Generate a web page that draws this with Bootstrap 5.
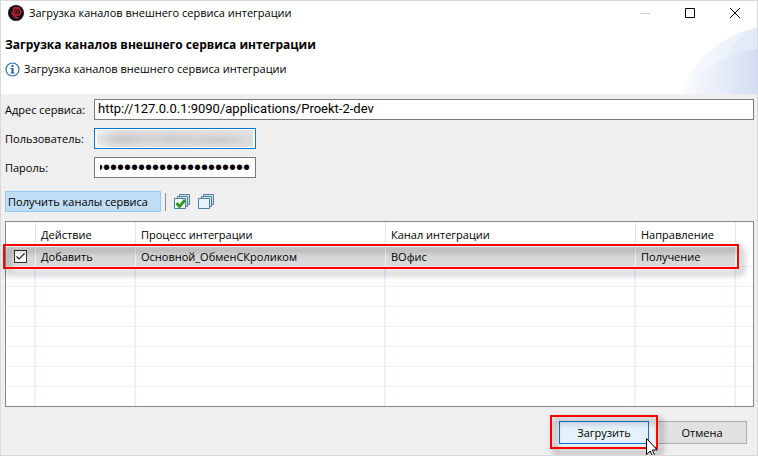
<!DOCTYPE html>
<html lang="ru">
<head>
<meta charset="utf-8">
<meta name="viewport" content="width=device-width, initial-scale=1">
<title>Загрузка каналов внешнего сервиса интеграции</title>
<link href="https://cdn.jsdelivr.net/npm/bootstrap@5.3.0/dist/css/bootstrap.min.css" rel="stylesheet">
<style>
body { font-family: "Open Sans", "Noto Sans", sans-serif; font-size: 11px; line-height: 16px; color: #000; background: #efefef; }
.win { border: 1px solid #d9d9d9; }
.titlebar { height: 24px; }
.win-btn { width: 45px; height: 22px; color: #000; }
.head { height: 69px; background: #fff; }
.head h1 { font-size: 12px; line-height: 16px; }
.swoosh { position: absolute; right: 0; bottom: 0; }
.fields { display: grid; grid-template-columns: 89px 1fr; row-gap: 8px; padding: 5px 3px 0 4px; }
.box { height: 21px; border: 1px solid #7a7a7a; border-radius: 0; background: #fff; color: #000; outline: 0; }
.narrow { width: 162px; }
.url { font-family: Roboto, sans-serif; font-size: 13px; padding: 0 3px 2px; }
.user { border-color: #0078d7; padding: 1px 2px; background:
  radial-gradient(ellipse 34px 9px at 28px 9px, #c9c7c9, transparent) content-box,
  radial-gradient(ellipse 40px 9px at 76px 9px, #cccacc, transparent) content-box,
  radial-gradient(ellipse 40px 8px at 122px 10px, #cccacc, transparent) content-box,
  linear-gradient(90deg, #eee, #e2e1e2 12%, #e0e0e1) content-box, #fff; }
.pass { font-family: "Liberation Sans", sans-serif; font-size: 20px; padding: 0 5px; text-indent: -4px; }
.get { height: 21px; width: 156px; padding: 0 2px; background: #bfddf5; border: 1px solid #90c8f6; color: #000; text-align: left; white-space: nowrap; }
.rule { width: 1px; height: 18px; background: #8d8d8d; }
.tools { padding-top: 13px; }
.grid-box { border: 1px solid #828790; background: #fff; margin: 9px 3px 0 4px; position: relative; }
.grid { table-layout: fixed; border-collapse: separate; border-spacing: 0; width: 100%; }
.grid th, .grid td { padding: 0 0 0 5px; font-weight: 400; line-height: 19px; white-space: nowrap; }
.grid th { height: 25px; border-right: 1px solid #e5e5e5; }
.grid td { height: 20px; border-bottom: 1px solid #efefef; border-right: 2px solid #ebf1fb; }
.grid th:last-child, .grid td:last-child { border-right: 0; }
.grid tbody tr:last-child td { height: 19px; border-bottom: 0; }
.grid .picked td:not(:last-child) { background: #d9d9d9; border-right-width: 1px; }
.tick { appearance: none; display: block; width: 13px; height: 13px; margin: 0 0 0 3px; border: 1px solid #333; background: #fff; }
.tick:checked { background: #fff url("data:image/svg+xml,%3Csvg xmlns='http://www.w3.org/2000/svg' viewBox='0 0 11 11'%3E%3Cpath d='M1.5 5.5 4 8l5.500-5.500' fill='none' stroke='%23222' stroke-width='1.200'/%3E%3C/svg%3E"); }
.frame { position: absolute; border: 2px solid #f00; filter: drop-shadow(4px 5px 3px rgba(0,0,0,.5)); pointer-events: none; }
.frame-row { left: -3px; right: 14px; top: 22px; height: 25px; }
.frame-btn { left: -9px; right: -9px; top: -6px; height: 34px; }
.actions { gap: 8px; padding: 14px 10px 10px; }
.push { width: 90px; height: 23px; padding: 0; border: 1px solid #adadad; background: #e1e1e1; color: #000; }
.push-main { border-color: #0078d7; background: #e5f1fb; }
.pointer { position: absolute; left: 87px; top: 17px; }
</style>
</head>
<body>
<main class="win d-flex flex-column min-vh-100 overflow-hidden position-relative">
  <header class="titlebar d-flex align-items-center bg-white">
    <svg class="ms-1 flex-shrink-0" width="20" height="16" viewBox="0 0 20 16"><g transform="translate(3)"><circle cx="8" cy="8" r="8" fill="#151012"/><path d="M6 3h5l2 4-2 3H7L5 7zM3.500 7.500l3 4.500 4 1" fill="none" stroke="#d8243c" stroke-width="1.300"/><circle cx="8.500" cy="6.500" r="1.600" fill="none" stroke="#d8243c"/></g></svg>
    <span class="ps-1 flex-grow-1">Загрузка каналов внешнего сервиса интеграции</span>
    <button class="win-btn btn p-0 border-0 d-flex align-items-center justify-content-center" aria-label="Свернуть"><svg width="10" height="10"><path d="M0 5.500h10" stroke="#ccc"/></svg></button>
    <button class="win-btn btn p-0 border-0 d-flex align-items-center justify-content-center" aria-label="Развернуть"><svg width="10" height="10"><path d="M.5.5h9v9h-9z" fill="none" stroke="#000"/></svg></button>
    <button class="win-btn btn p-0 border-0 d-flex align-items-center justify-content-center" aria-label="Закрыть"><svg width="10" height="10"><path d="M0 0l10 10M10 0L0 10" stroke="#000" stroke-width="1"/></svg></button>
  </header>
  <section class="head position-relative">
    <svg class="swoosh" width="74" height="66" viewBox="0 0 74 66" aria-hidden="true">
      <defs>
        <linearGradient id="g1"><stop offset="0" stop-color="#fafbfe"/><stop offset="1" stop-color="#e6ecf8"/></linearGradient>
        <linearGradient id="g2"><stop offset="0" stop-color="#fafbfe"/><stop offset="1" stop-color="#d3def3"/></linearGradient>
      </defs>
      <path d="M0 66C1 36 48 2 74 0v66z" fill="url(#g1)"/>
      <path d="M44 28C52 14 62 4 74 1v22C64 24 54 26 44 32z" fill="#dfe8f7" opacity=".6"/>
      <path d="M0 66C4 50 46 23 74 21v45z" fill="url(#g2)"/>
    </svg>
    <div class="d-flex flex-column gap-2 ps-1 pt-2">
      <h1 class="fw-bold mb-0 mt-1">Загрузка каналов внешнего сервиса интеграции</h1>
      <div class="d-flex align-items-center gap-1">
        <svg width="15" height="15" viewBox="0 0 15 15"><circle cx="7.500" cy="7.500" r="6.500" fill="#fff" stroke="#2b6da6" stroke-width="1.200"/><path d="M6.500 3h2v2h-2zM5.500 6h3v4.500h1v1h-4v-1h1V7h-1z" fill="#1c5f9c"/></svg>
        <span>Загрузка каналов внешнего сервиса интеграции</span>
      </div>
    </div>
  </section>
  <form class="d-flex flex-column flex-grow-1" onsubmit="return false">
    <div class="fields align-items-center">
      <label for="url">Адрес сервиса:</label>
      <input id="url" class="box url w-100" type="text" value="http://127.0.0.1:9090/applications/Proekt-2-dev">
      <label for="user">Пользователь:</label>
      <input id="user" class="box user narrow" type="text" autocomplete="off">
      <label for="pass">Пароль:</label>
      <input id="pass" class="box pass narrow" type="password" value="0000000000000000000000" autocomplete="off">
    </div>
    <div class="tools d-flex align-items-center ps-1">
      <button type="button" class="get">Получить каналы сервиса</button>
      <span class="rule ms-1"></span>
      <button type="button" class="btn p-0 border-0 d-flex ms-2" aria-label="Выбрать все"><svg width="16" height="16" viewBox="0 0 16 16"><g fill="#d3e3ee" stroke="#4e81a0"><path d="M5.500.5h10v10h-10z"/><path d="M3.500 2.500h10v10h-10z"/><path d="M.5 4.500h11v10H.5z" fill="#f4f9fc"/></g><path d="M2.500 9l3 3.500L11 6" fill="none" stroke="#2f9b1d" stroke-width="2.800"/></svg></button>
      <button type="button" class="btn p-0 border-0 d-flex ms-2" aria-label="Снять выбор"><svg width="16" height="16" viewBox="0 0 16 16"><g fill="#d3e3ee" stroke="#4e81a0"><path d="M5.500.5h10v10h-10z"/><path d="M3.500 2.500h10v10h-10z"/><path d="M.5 4.500h11v10H.5z" fill="#e8f1f7"/></g></svg></button>
    </div>
    <div class="grid-box">
      <table class="grid">
        <colgroup><col style="width:30px"><col style="width:100px"><col style="width:250px"><col><col style="width:100px"><col style="width:17px"></colgroup>
        <thead><tr><th></th><th>Действие</th><th>Процесс интеграции</th><th>Канал интеграции</th><th>Направление</th><th></th></tr></thead>
        <tbody>
          <tr class="picked"><td><input class="tick" type="checkbox" checked aria-label="Добавить канал ВОфис"></td><td>Добавить</td><td>Основной_ОбменСКроликом</td><td>ВОфис</td><td>Получение</td><td></td></tr>
          <tr><td></td><td></td><td></td><td></td><td></td><td></td></tr>
          <tr><td></td><td></td><td></td><td></td><td></td><td></td></tr>
          <tr><td></td><td></td><td></td><td></td><td></td><td></td></tr>
          <tr><td></td><td></td><td></td><td></td><td></td><td></td></tr>
          <tr><td></td><td></td><td></td><td></td><td></td><td></td></tr>
          <tr><td></td><td></td><td></td><td></td><td></td><td></td></tr>
          <tr><td></td><td></td><td></td><td></td><td></td><td></td></tr>
        </tbody>
      </table>
      <div class="frame frame-row"></div>
    </div>
    <div class="actions d-flex justify-content-end">
      <div class="position-relative">
        <button type="submit" class="push push-main">Загрузить</button>
        <div class="frame frame-btn"></div>
        <svg class="pointer" width="12" height="19" viewBox="0 0 12 19"><path d="M.5.5v16l3.700-3.500 2.500 5.500 2-1-2.400-5.500h5z" fill="#fff" stroke="#000"/></svg>
      </div>
      <button type="button" class="push">Отмена</button>
    </div>
  </form>
</main>
<script src="https://cdn.jsdelivr.net/npm/bootstrap@5.3.0/dist/js/bootstrap.bundle.min.js"></script>
</body>
</html>
